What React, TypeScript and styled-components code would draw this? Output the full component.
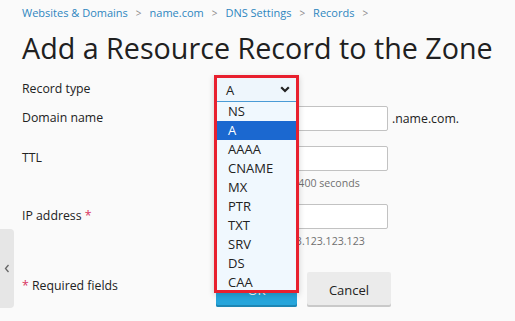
import React from "react";
import styled, { createGlobalStyle } from "styled-components";

const GlobalStyle = createGlobalStyle`
  html, body {
    margin: 0;
    padding: 0;
    background: #fafafa;
    font-family: "Open Sans", "Liberation Sans", sans-serif;
    color: #222;
  }
`;

const Page = styled.div`
  position: relative;
  width: 515px;
  height: 321px;
  overflow: hidden;
  padding: 5px 0 0 22px;
  box-sizing: border-box;
`;

const Breadcrumbs = styled.div`
  display: flex;
  align-items: center;
  gap: 8px;
  font-size: 11px;
  line-height: 16px;
  height: 16px;
`;

const Crumb = styled.a`
  color: #2e86bf;
  text-decoration: none;
`;

const Sep = styled.span`
  color: #8a8a8a;
  font-size: 10px;
`;

const Title = styled.h1`
  margin: 7px 0 10px;
  font-size: 28.7px;
  line-height: 40px;
  font-weight: 400;
  color: #202020;
`;

const Row = styled.div<{ $gap: number }>`
  display: grid;
  grid-template-columns: 195px 171px auto;
  align-items: start;
  margin-bottom: ${(p) => p.$gap}px;
`;

const Label = styled.div<{ $top?: number }>`
  font-size: 12.3px;
  line-height: 18px;
  padding-top: ${(p) => p.$top ?? 3}px;
`;

const Star = styled.span`
  color: #d8345f;
`;

const Field = styled.div`
  display: flex;
  flex-direction: column;
`;

const Input = styled.div`
  height: 25px;
  box-sizing: border-box;
  background: #fff;
  border: 1px solid #c2c2c2;
  border-radius: 2px;
`;

const Hint = styled.div`
  font-size: 10.6px;
  line-height: 14px;
  margin-top: 5px;
  color: #707070;
  white-space: nowrap;
`;

const Suffix = styled.div`
  font-size: 12.3px;
  line-height: 25px;
  padding-left: 4px;
`;

const SelectWrap = styled.div`
  position: relative;
  width: 79px;
`;

const SelectBox = styled.div`
  height: 24px;
  box-sizing: border-box;
  display: flex;
  align-items: center;
  justify-content: space-between;
  padding: 0 6px 0 9px;
  background: #eef6fc;
  border-bottom: 1px solid #4a9bd6;
  font-size: 13px;
`;

const Highlight = styled.div`
  position: absolute;
  left: -3px;
  top: -3px;
  width: 79px;
  height: 212px;
  border: 3px solid #e8202e;
  box-shadow: 0 2px 6px rgba(0, 0, 0, 0.18);
  pointer-events: none;
  z-index: 3;
`;

const List = styled.ul`
  position: absolute;
  left: 0;
  top: 24px;
  width: 79px;
  height: 188px;
  margin: 0;
  padding: 0;
  list-style: none;
  overflow: hidden;
  background: #f0f8fe;
  z-index: 2;
`;

const Option = styled.li<{ $active?: boolean }>`
  height: 19px;
  line-height: 19px;
  padding-left: 11px;
  font-size: 13px;
  color: ${(p) => (p.$active ? "#fff" : "#222")};
  background: ${(p) => (p.$active ? "#1b68d0" : "transparent")};
`;

const Buttons = styled.div`
  grid-column: 2 / span 2;
  display: flex;
  gap: 10px;
  margin-left: -1px;
`;

const Button = styled.button<{ $primary?: boolean }>`
  width: ${(p) => (p.$primary ? 81 : 84)}px;
  height: 35px;
  border: none;
  border-radius: 2px;
  font-family: inherit;
  font-size: 13px;
  color: ${(p) => (p.$primary ? "#fff" : "#222")};
  background: ${(p) => (p.$primary ? "#26a5db" : "#ebebeb")};
  box-shadow: inset 0 -2px 0 ${(p) => (p.$primary ? "#1d86b4" : "#c9c9c9")};
`;

const SideTab = styled.div`
  position: absolute;
  left: 0;
  top: 229px;
  width: 14px;
  height: 79px;
  background: #e6e6e6;
  border-radius: 0 4px 4px 0;
  display: flex;
  align-items: center;
  justify-content: center;
`;

const types = ["NS", "A", "AAAA", "CNAME", "MX", "PTR", "TXT", "SRV", "DS", "CAA"];

const Chevron = () => (
  <svg width="10" height="7" viewBox="0 0 10 7">
    <path d="M1.2 1.2 L5 5 L8.8 1.2" fill="none" stroke="#222" strokeWidth="2.2" />
  </svg>
);

export default function App() {
  return (
    <>
      <GlobalStyle />
      <Page>
        <Breadcrumbs>
          <Crumb>Websites &amp; Domains</Crumb>
          <Sep>&gt;</Sep>
          <Crumb>name.com</Crumb>
          <Sep>&gt;</Sep>
          <Crumb>DNS Settings</Crumb>
          <Sep>&gt;</Sep>
          <Crumb>Records</Crumb>
          <Sep>&gt;</Sep>
        </Breadcrumbs>
        <Title>Add a Resource Record to the Zone</Title>

        <Row $gap={4}>
          <Label $top={2}>Record type</Label>
          <SelectWrap>
            <SelectBox>
              <span>A</span>
              <Chevron />
            </SelectBox>
            <List>
              {types.map((t) => (
                <Option key={t} $active={t === "A"}>
                  {t}
                </Option>
              ))}
            </List>
            <Highlight />
          </SelectWrap>
        </Row>

        <Row $gap={15}>
          <Label>Domain name</Label>
          <Input />
          <Suffix>.name.com.</Suffix>
        </Row>

        <Row $gap={14}>
          <Label>TTL</Label>
          <Field>
            <Input />
            <Hint>Default TTL is 86400 seconds</Hint>
          </Field>
        </Row>

        <Row $gap={24}>
          <Label>
            IP address <Star>*</Star>
          </Label>
          <Field>
            <Input />
            <Hint>For example, 123.123.123.123</Hint>
          </Field>
        </Row>

        <Row $gap={0}>
          <Label $top={5}>
            <Star>*</Star> Required fields
          </Label>
          <Buttons>
            <Button $primary>OK</Button>
            <Button>Cancel</Button>
          </Buttons>
        </Row>

        <SideTab>
          <svg width="6" height="9" viewBox="0 0 6 9">
            <path d="M4.5 1 L1.5 4.5 L4.5 8" fill="none" stroke="#666" strokeWidth="1.3" />
          </svg>
        </SideTab>
      </Page>
    </>
  );
}
